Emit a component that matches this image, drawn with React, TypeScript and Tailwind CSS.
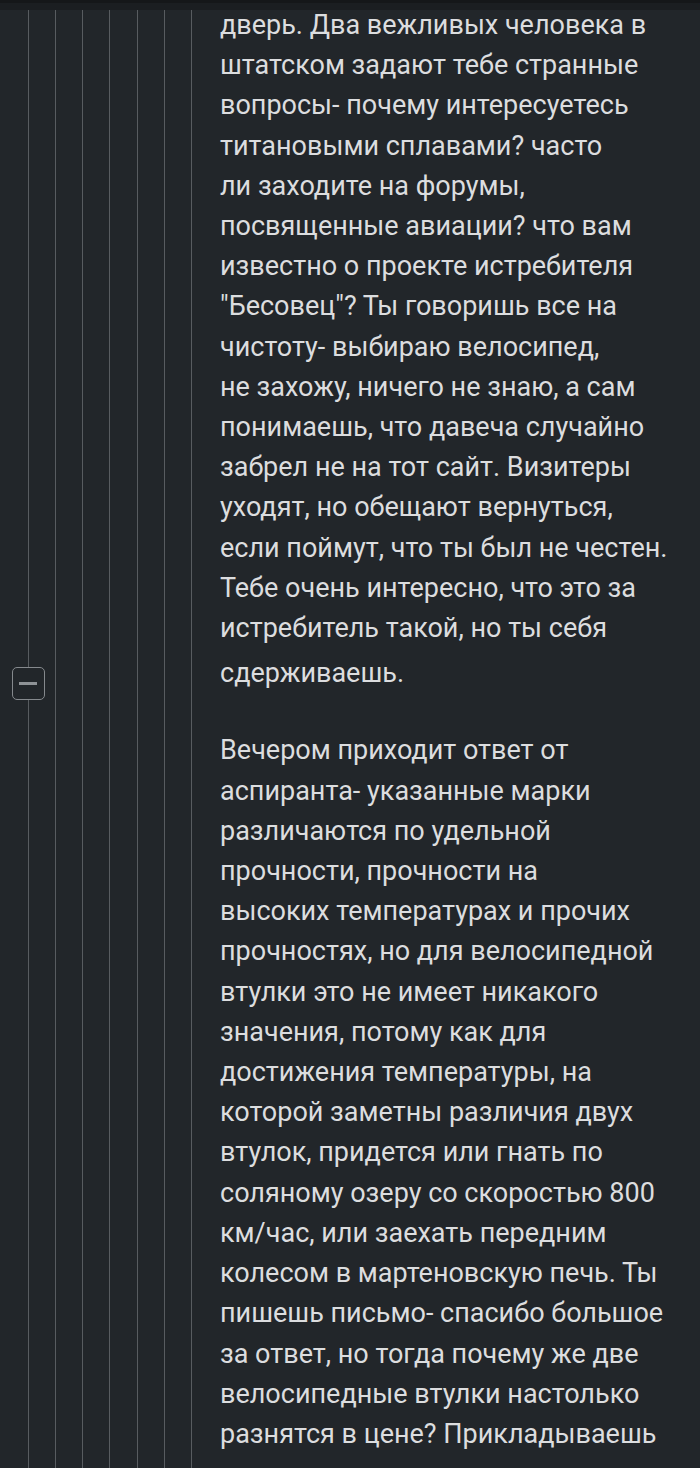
import React from "react";

const firstParagraph = [
  "дверь. Два вежливых человека в",
  "штатском задают тебе странные",
  "вопросы- почему интересуетесь",
  "титановыми сплавами? часто",
  "ли заходите на форумы,",
  "посвященные авиации? что вам",
  "известно о проекте истребителя",
  "\"Бесовец\"? Ты говоришь все на",
  "чистоту- выбираю велосипед,",
  "не захожу, ничего не знаю, а сам",
  "понимаешь, что давеча случайно",
  "забрел не на тот сайт. Визитеры",
  "уходят, но обещают вернуться,",
  "если поймут, что ты был не честен.",
  "Тебе очень интересно, что это за",
  "истребитель такой, но ты себя",
];

const secondParagraph = [
  "Вечером приходит ответ от",
  "аспиранта- указанные марки",
  "различаются по удельной",
  "прочности, прочности на",
  "высоких температурах и прочих",
  "прочностях, но для велосипедной",
  "втулки это не имеет никакого",
  "значения, потому как для",
  "достижения температуры, на",
  "которой заметны различия двух",
  "втулок, придется или гнать по",
  "соляному озеру со скоростью 800",
  "км/час, или заехать передним",
  "колесом в мартеновскую печь. Ты",
  "пишешь письмо- спасибо большое",
  "за ответ, но тогда почему же две",
  "велосипедные втулки настолько",
  "разнятся в цене? Прикладываешь",
];

const ThreadLines = () => (
  <div className="flex w-[220px] shrink-0">
    <div className="flex w-[55px] flex-col items-center pl-px">
      <div className="h-[657px] w-px bg-[#585c60]" />
      <button className="flex h-[33px] w-[33px] items-center justify-center rounded-[5px] border-[1.5px] border-[#85898d]">
        <span className="h-[2.5px] w-[18px] bg-[#8e9296]" />
      </button>
      <div className="w-px flex-1 bg-[#585c60]" />
    </div>
    {[0, 1, 2, 3, 4, 5].map((i) => (
      <div key={i} className="w-[27.2px] shrink-0">
        <div className="h-full w-px bg-[#585c60]" />
      </div>
    ))}
  </div>
);

const App = () => {
  return (
    <div className="flex h-[1468px] flex-col overflow-hidden bg-[#22262a] font-['Roboto',sans-serif]">
      <div className="h-[10px] shrink-0 bg-[#1b1e21] border-t-[3px] border-[#151719]" />
      <div className="flex flex-1">
        <ThreadLines />
        <div className="-mt-[5px] text-[27px] leading-[40.2px] text-[#dcdddf]">
          {firstParagraph.map((line) => (
            <div key={line} className="whitespace-nowrap">
              {line}
            </div>
          ))}
          <div className="mt-[5px] whitespace-nowrap">сдерживаешь.</div>
          <div className="mt-[37px]">
            {secondParagraph.map((line) => (
              <div key={line} className="whitespace-nowrap">
                {line}
              </div>
            ))}
          </div>
        </div>
      </div>
    </div>
  );
};

export default App;
